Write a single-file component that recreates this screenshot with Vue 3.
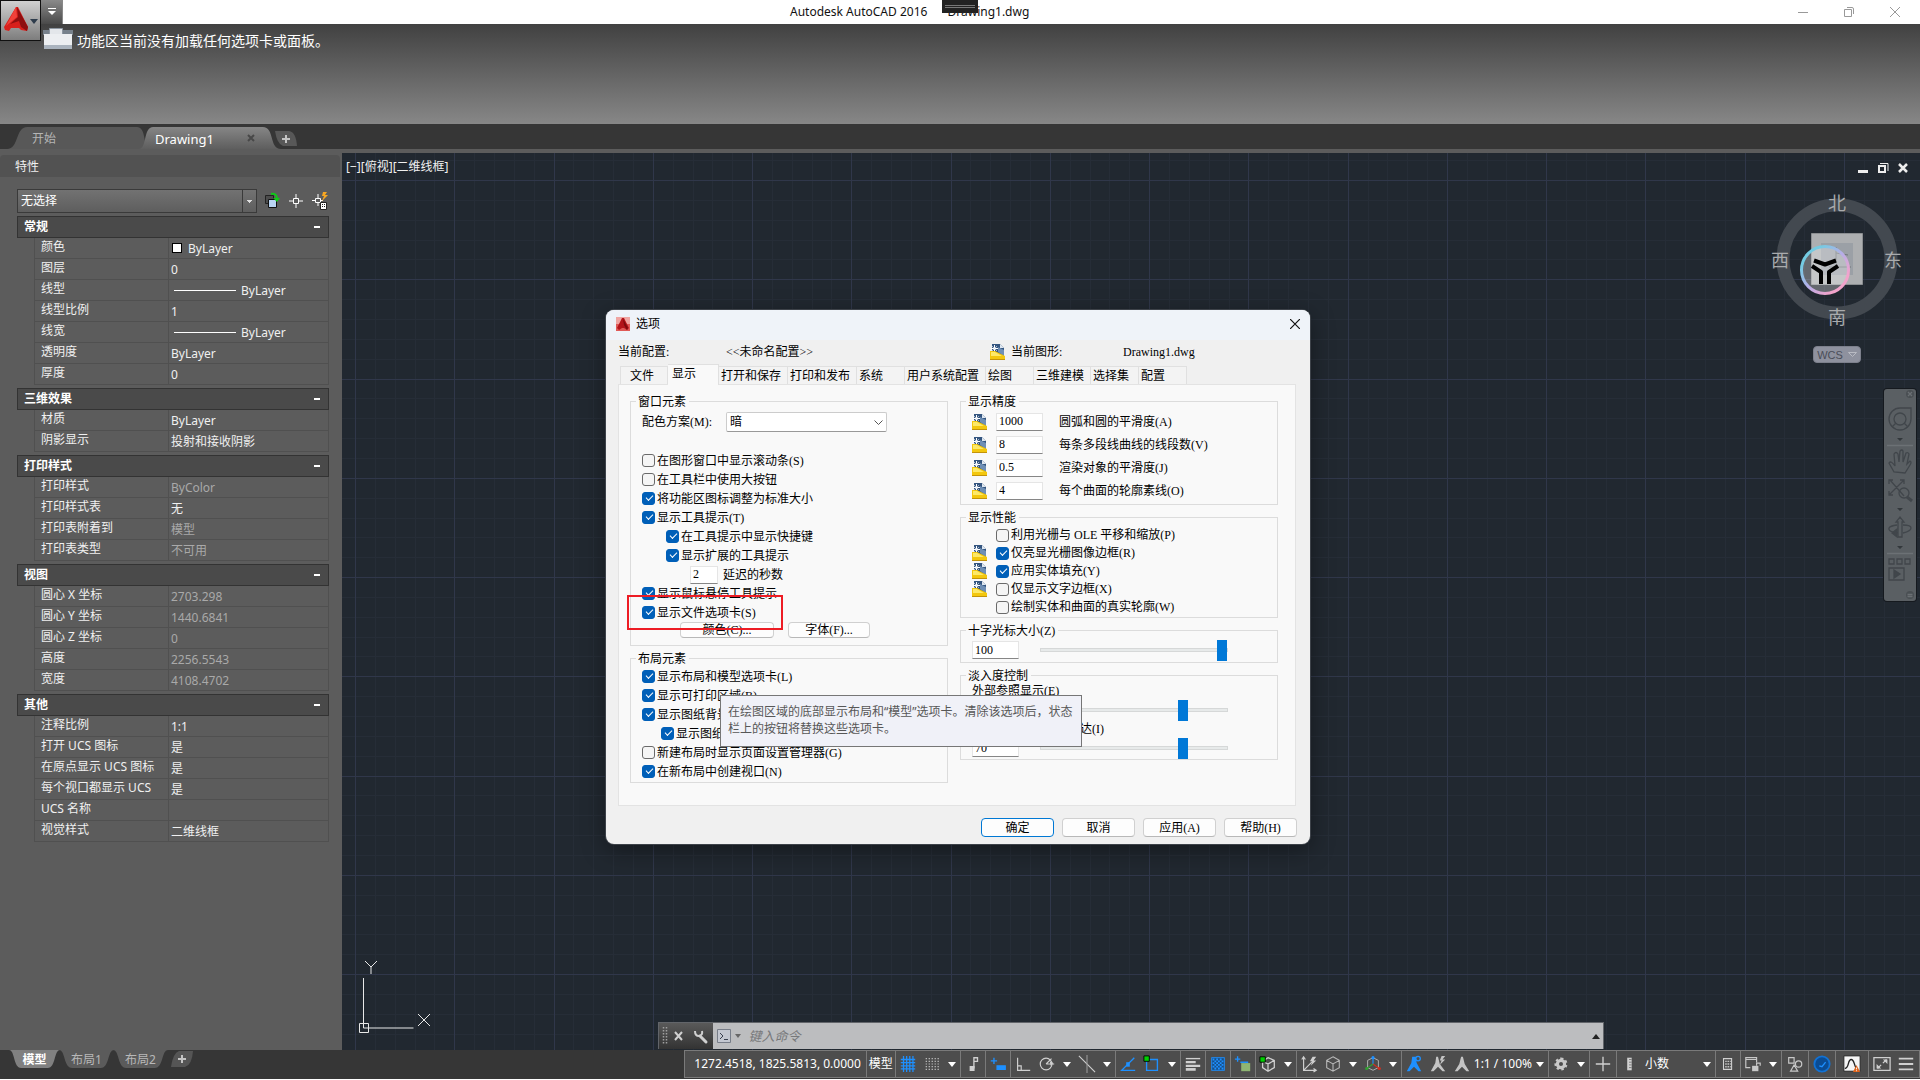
<script setup>
import { ref } from 'vue';

const sections = [
    {
        title: '常规',
        rows: [
            { label: '颜色', value: 'ByLayer', swatch: true },
            { label: '图层', value: '0' },
            { label: '线型', value: 'ByLayer', line: true },
            { label: '线型比例', value: '1' },
            { label: '线宽', value: 'ByLayer', line: true },
            { label: '透明度', value: 'ByLayer' },
            { label: '厚度', value: '0' },
        ],
    },
    {
        title: '三维效果',
        rows: [
            { label: '材质', value: 'ByLayer' },
            { label: '阴影显示', value: '投射和接收阴影' },
        ],
    },
    {
        title: '打印样式',
        rows: [
            { label: '打印样式', value: 'ByColor', muted: true },
            { label: '打印样式表', value: '无' },
            { label: '打印表附着到', value: '模型', muted: true },
            { label: '打印表类型', value: '不可用', muted: true },
        ],
    },
    {
        title: '视图',
        rows: [
            { label: '圆心 X 坐标', value: '2703.298', muted: true },
            { label: '圆心 Y 坐标', value: '1440.6841', muted: true },
            { label: '圆心 Z 坐标', value: '0', muted: true },
            { label: '高度', value: '2256.5543', muted: true },
            { label: '宽度', value: '4108.4702', muted: true },
        ],
    },
    {
        title: '其他',
        rows: [
            { label: '注释比例', value: '1:1' },
            { label: '打开 UCS 图标', value: '是' },
            { label: '在原点显示 UCS 图标', value: '是' },
            { label: '每个视口都显示 UCS', value: '是' },
            { label: 'UCS 名称', value: '' },
            { label: '视觉样式', value: '二维线框' },
        ],
    },
];

// drawing grid, every fifth line is a major one
const gridStep = 19.853;
const gridLines = (origin, from, count) =>
    Array.from({ length: count }, (_, i) => ({
        pos: Math.round(origin + (i + from) * gridStep),
        major: (i + from) % 5 === 0,
    }));
const columns = gridLines(13, 0, 100);
const gridRows = gridLines(27, -1, 60);

const tabs = ['文件', '显示', '打开和保存', '打印和发布', '系统', '用户系统配置', '绘图', '三维建模', '选择集', '配置'];
const activeTab = ref('显示');

const windowElements = ref([
    { label: '在图形窗口中显示滚动条(S)', on: false },
    { label: '在工具栏中使用大按钮', on: false },
    { label: '将功能区图标调整为标准大小', on: true },
    { label: '显示工具提示(T)', on: true },
    { label: '在工具提示中显示快捷键', on: true, indent: true },
    { label: '显示扩展的工具提示', on: true, indent: true },
    { label: '延迟的秒数', text: '2' },
    { label: '显示鼠标悬停工具提示', on: true },
    { label: '显示文件选项卡(S)', on: true },
]);

const layoutElements = ref([
    { label: '显示布局和模型选项卡(L)', on: true },
    { label: '显示可打印区域(B)', on: true },
    { label: '显示图纸背景(K)', on: true },
    { label: '显示图纸阴影(E)', on: true, indent: true },
    { label: '新建布局时显示页面设置管理器(G)', on: false },
    { label: '在新布局中创建视口(N)', on: true },
]);

const resolution = ref([
    { label: '圆弧和圆的平滑度(A)', value: '1000' },
    { label: '每条多段线曲线的线段数(V)', value: '8' },
    { label: '渲染对象的平滑度(J)', value: '0.5' },
    { label: '每个曲面的轮廓素线(O)', value: '4' },
]);

const performance = ref([
    { label: '利用光栅与 OLE 平移和缩放(P)', on: false },
    { label: '仅亮显光栅图像边框(R)', on: true, dwg: true },
    { label: '应用实体填充(Y)', on: true, dwg: true },
    { label: '仅显示文字边框(X)', on: false, dwg: true },
    { label: '绘制实体和曲面的真实轮廓(W)', on: false },
]);

const crosshair = ref(100);
const xrefFade = ref(70);
const editFade = ref(70);

const blue = '#1e90ff';
const icons = {
    grid: `<g stroke="${blue}" stroke-width="1.4"><path d="M5 1V19M8.500 1V19M12 1V19M15.500 1V19M2 5H18M2 8.500H18M2 12H18M2 15.500H18"/></g>`,
    snap: '<path stroke="#c8c8c8" stroke-width="1.3" stroke-dasharray="1.300 2" d="M3 4H18M3 7H18M3 10H18M3 13H18M3 16H18"/>',
    infer: '<g stroke="#d0d0d0" stroke-width="1.500"><path d="M11 3h4v4h-4zM11 7v8"/><path fill="#d0d0d0" d="M7 13h4v4H7z"/></g>',
    dynamic: `<g stroke="${blue}" stroke-width="1.500"><path d="M2 6.500h7M5.500 3v7"/><path fill="${blue}" d="M9 12h9v4H9z"/></g>`,
    ortho: '<path stroke="#d0d0d0" stroke-width="1.300" d="M4 3V17H18M4 12h4v5"/>',
    polar: '<g stroke="#d0d0d0" stroke-width="1.300"><circle cx="9" cy="10" r="6.500"/><path d="M9 10L15 4M9 10h9"/></g><path fill="#d0d0d0" d="M13 7l4 2-3 3z"/>',
    iso: '<g stroke="#d0d0d0" stroke-width="1.200"><path d="M1 1L19 19"/><path d="M10 0V20" stroke="#9a9a9a"/></g>',
    otrack: `<g stroke="${blue}" stroke-width="1.500"><path d="M17 3L3 17H18"/></g><path fill="${blue}" d="M8 8h4v5H8z"/>`,
    osnap: `<path stroke="${blue}" stroke-width="1.500" d="M4 5h12v12H4z"/><path fill="#00d000" stroke="#000" d="M1 1h6v6H1z"/>`,
    lwt: '<path stroke="#d0d0d0" d="M2 4h16" stroke-width="1.500"/><path stroke="#d0d0d0" stroke-width="2.500" d="M2 8h11M2 12h16"/><path stroke="#d0d0d0" stroke-width="3" d="M2 16h11"/>',
    transp: `<rect x="3" y="3" width="14" height="14" fill="#174f88" stroke="${blue}"/><path stroke="${blue}" stroke-dasharray="2 2" stroke-width="2" d="M4 5h12M4 9h12M4 13h12"/><path stroke="${blue}" stroke-dasharray="2 2" stroke-dashoffset="2" stroke-width="2" d="M4 7h12M4 11h12M4 15h12"/>`,
    cycle: `<path stroke="${blue}" stroke-width="1.500" d="M1 4.500h6M4 1.500v6M7 8h8v3"/><path fill="#8fb573" d="M8 9h10v9H8z"/>`,
    osnap3d: '<g stroke="#d0d0d0" stroke-width="1.400"><path d="M10 3l7 3v8l-7 4-6-4V7zM4 7l6 3 7-4M10 10v8"/></g><path fill="#00d000" stroke="#000" d="M1 2h6v6H1z"/>',
    ducs: '<path stroke="#d0d0d0" stroke-width="1.300" d="M4 3V17H18M4 17L15 6M2 5l2-3 2 3M15 15l3 2-3 2"/><path fill="#d0d0d0" d="M14 2l4 0-3 4h3l-6 6 2-5h-3z"/>',
    cube: '<path stroke="#b8b8b8" stroke-width="1.200" d="M10 2l7 4v8l-7 4-7-4V6zM3 6l7 4 7-4M10 10v8"/>',
    gizmo: `<path stroke="#b8b8b8" d="M10 3l6 3v8l-6 3-6-3V6z"/><path stroke="${blue}" stroke-width="1.300" d="M10 2v8"/><path stroke="#d03020" stroke-width="1.300" d="M10 10l7 5"/><path stroke="#30a030" stroke-width="1.300" d="M10 10l-7 5"/><circle cx="10" cy="3" r="1.800" fill="${blue}"/><circle cx="17" cy="15" r="1.800" fill="#d03020"/><circle cx="3" cy="15" r="1.800" fill="#30a030"/>`,
    annoOn: `<path fill="${blue}" d="M8 2h4l1 7 5 9h-3l-5-5-5 5H2l5-9z"/><circle cx="14.500" cy="4" r="2.500" stroke="${blue}" stroke-width="1.500"/>`,
    annoAuto: '<path fill="#c4c4c4" d="M8 2h2l2 8 6 8h-3l-5-5-5 5H2l5-9zM14 1h4l-3 4h3l-6 6 2-5h-2z"/>',
    anno: '<path fill="#c4c4c4" d="M9 2h2l2 8 5 8h-3l-5-5-5 5H2l5-8z"/>',
    gear: '<circle cx="10" cy="10" r="4" stroke="#c8c8c8" stroke-width="3.500"/><path stroke="#c8c8c8" stroke-width="2.500" stroke-dasharray="2.600 2.600" d="M10 4a6 6 0 1 1-.1 0z"/>',
    plus: '<path stroke="#d0d0d0" stroke-width="1.500" d="M10 2v16M2 10h16"/>',
    ruler: '<path fill="#d0d0d0" d="M8 3h5v14H8z"/><path stroke="#777" d="M10 5h3M10 8h3M10 11h3M10 14h3"/>',
    quick: '<path stroke="#d0d0d0" stroke-width="1.200" d="M5 4h9v12H5z"/><path stroke="#d0d0d0" stroke-width="1.500" stroke-dasharray="1.500 1" d="M7 7h6M7 10h6M7 13h6"/>',
    lock: '<path stroke="#c8c8c8" stroke-width="1.300" d="M7 14H2V3h12v5M2 5h12M14 12V9h4v3"/><path fill="#c8c8c8" d="M9 12h7v6H9z"/>',
    isolate: '<path stroke="#c8c8c8" stroke-width="1.300" d="M3 3h6v6H3zM5 18l4-7 4 7z"/><circle cx="14" cy="10" r="3.500" stroke="#c8c8c8" stroke-width="1.300"/>',
    hardware: `<circle cx="10" cy="10" r="8.500" fill="#0a4c94" stroke="#1272d4" stroke-width="2"/><path stroke="${blue}" stroke-width="1.500" d="M7 12l3 1 4-5"/>`,
    chart: '<path fill="#f4f4f4" stroke="#222" d="M1 1h18v17H1z"/><path stroke="#222" stroke-width="1.500" d="M2 15c5 0 3-10 7-10s3 7 6 10"/><path fill="#e0641c" d="M15 11l4 8h-8z"/><path stroke="#fff" d="M15 14v2M15 17v1"/>',
    clean: '<path stroke="#d0d0d0" stroke-width="1.400" d="M1 3h18v14H1zM11 9l4-4M9 11l-4 4"/><path fill="#d0d0d0" d="M11 5h5v5zM4 10v5h5z"/>',
    menu: '<path stroke="#d0d0d0" stroke-width="2" d="M2 4h16M2 10h16M2 16h16"/>',
};

// '>' is a drop-down arrow, the rest are icon names
const statusCells = [
    { items: ['grid', 'snap', '>'] },
    { items: ['infer'] },
    { items: ['dynamic'] },
    { items: ['ortho', 'polar', '>', 'iso', '>'] },
    { items: ['otrack', 'osnap', '>'] },
    { items: ['lwt'] },
    { items: ['transp'] },
    { items: ['cycle'] },
    { items: ['osnap3d', '>'] },
    { items: ['ducs', 'cube', '>', 'gizmo', '>'] },
    { items: ['annoOn', 'annoAuto', 'anno'], text: '1:1 / 100%', arrow: true },
    { items: ['gear', '>'] },
    { items: ['plus'], size: 'spaced' },
    { items: ['ruler'], text: '小数', arrow: true, wide: true },
    { items: ['quick'] },
    { items: ['lock', '>'] },
    { items: ['isolate'], size: 'spaced' },
    { items: ['hardware'], size: 'spaced' },
    { items: ['chart'], size: 'roomy' },
    { items: ['clean', 'menu'], size: 'spaced' },
];

const dwgIcon = '<path fill="#34557f" d="M2 0h8l4 4v9H2z"/><path fill="#6f8fb5" d="M8 3l6 3v6L8 8z"/><path fill="#dfe7f0" d="M10 0l4 4h-4z"/><path stroke="#fff" d="M4.500 1v7M1 4.500h7"/><path stroke="#dbe4ef" stroke-width=".7" d="M2 2l5 5M7 2L2 7"/><path fill="#f3c70e" d="M0 7h5l10 5v4H0z"/><path fill="#fde968" d="M1 8h4l7 4H1z"/><path stroke="#c3930a" d="M0 15.500h15"/>';
</script>

<template>
    <div class="app">
        <header class="titlebar">
            <button class="app-button" aria-label="AutoCAD">
                <svg width="38" height="38" viewBox="0 0 38 38">
                    <path fill="#d8201c" d="M15 5h2l10 20-1 4-6-1-2-2H10l-2 3-4-1-1-3z" />
                    <path fill="#8e0f10" d="M16 5l11 20-1 4-6-4-2-6-9 3 8-7z" />
                    <path fill="#f0413a" d="M15 5l1 10-11 9z" />
                    <path fill="#2e3c4c" d="M29 17h8l-4 5z" />
                </svg>
            </button>
            <button class="qat" aria-label="自定义快速访问工具栏">
                <svg width="10" height="8" viewBox="0 0 10 8"><path fill="#fff" d="M1 0h8v1H1zM1 3h8L5 7z" /></svg>
            </button>
            <span class="titlebar-text">Autodesk AutoCAD 2016 <span>Drawing1.dwg</span></span>
            <div class="handle"></div>
            <div class="window-buttons">
                <button aria-label="最小化"><svg width="10" height="10" viewBox="0 0 10 10"><path d="M0 5.500h10" stroke="#999" /></svg></button>
                <button aria-label="还原"><svg width="10" height="10" viewBox="0 0 10 10"><path d="M.5 2.500h7v7h-7zM3 .5h5q1.500 0 1.500 1.500v5" fill="none" stroke="#999" /></svg></button>
                <button aria-label="关闭"><svg width="10" height="10" viewBox="0 0 10 10"><path d="M0 0l10 10M10 0L0 10" stroke="#999" /></svg></button>
            </div>
        </header>

        <div class="ribbon">
            <svg width="30" height="22" viewBox="0 0 30 22">
                <path fill="#77818c" d="M0 2h30v5H0z" />
                <path fill="#e3e6ea" stroke="#8d96a1" d="M6.500.5h13v6h-13z" />
                <path fill="#eceef1" d="M1 6h28v13H1z" />
                <path fill="#aab3be" d="M1 17h28v4H1z" />
            </svg>
            <span>功能区当前没有加载任何选项卡或面板。</span>
        </div>

        <nav class="file-tabs">
            <button class="file-tab">
                <svg viewBox="0 0 140 21" preserveAspectRatio="none"><path d="M0 21C12 21 8 0 20 0H128C138 0 134 21 140 21Z" fill="#585858" /></svg>
                <span>开始</span>
            </button>
            <button class="file-tab current">
                <svg viewBox="0 0 140 21" preserveAspectRatio="none">
                    <defs>
                        <linearGradient id="tabFill" x2="0" y2="1"><stop stop-color="#868686" /><stop offset="1" stop-color="#5e5e5e" /></linearGradient>
                    </defs>
                    <path d="M0 21C8 21 4 0 14 0H122C134 0 128 21 140 21Z" fill="url(#tabFill)" />
                </svg>
                <span>Drawing1</span>
                <svg class="tab-close" viewBox="0 0 8 8"><path d="M1 1l6 6M7 1L1 7" stroke="#484848" stroke-width="2" /></svg>
            </button>
            <button class="add-tab" aria-label="新图形">
                <svg width="22" height="15" viewBox="0 0 22 15"><path d="M0 0H14Q21 1 22 15H8Q2 13 0 0Z" fill="#585858" /><path d="M11 4v8M7 8h8" stroke="#c4c4c4" stroke-width="2" /></svg>
            </button>
        </nav>

        <main class="workspace">
            <aside class="palette">
                <h2 class="palette-title">特性</h2>
                <div class="palette-body">
                    <div class="picker">
                        <select aria-label="选择对象"><option>无选择</option></select>
                        <button aria-label="切换 PICKADD">
                            <svg width="16" height="18" viewBox="0 0 16 18"><path fill="#4c4c4c" stroke="#222" d="M1.500 3.500h8v8h-8z" /><path fill="#b9d4f3" stroke="#111" d="M4.500 7.500h8v8h-8z" /><path d="M7 2q6-1 6 5" fill="none" stroke="#10c818" stroke-width="2" /><path fill="#10c818" d="M9 6h7l-3 4z" /></svg>
                        </button>
                        <button aria-label="选择对象">
                            <svg width="14" height="14" viewBox="0 0 14 14"><path d="M7 0v5M7 9v5M0 7h5M9 7h5M4.500 4.500h5v5h-5z" fill="none" stroke="#fff" /></svg>
                        </button>
                        <button aria-label="快速选择">
                            <svg width="16" height="18" viewBox="0 0 16 18"><path d="M6 2v5M6 10v4M0 8.500h4M8 8.500h3M3.500 6.500h5v4h-5z" fill="none" stroke="#fff" /><path fill="#f5a623" d="M11 0h4l-2 3h3l-6 6 2-5h-2z" /><path fill="#fff" stroke="#222" d="M8.500 10.500h6v7h-6z" /><path d="M10 12.500h4M10 14.500h4" stroke="#222" stroke-dasharray="1 1" /></svg>
                        </button>
                    </div>
                    <section v-for="section in sections" :key="section.title" class="prop-section">
                        <h3>{{ section.title }}<span class="collapse"></span></h3>
                        <table>
                            <tbody>
                                <tr v-for="row in section.rows" :key="row.label">
                                    <th scope="row">{{ row.label }}</th>
                                    <td :class="{ muted: row.muted }">
                                        <span v-if="row.swatch" class="swatch"></span>
                                        <span v-if="row.line" class="sample"></span>{{ row.value }}
                                    </td>
                                </tr>
                            </tbody>
                        </table>
                    </section>
                </div>
            </aside>

            <section class="canvas">
                <svg class="grid" width="100%" height="100%">
                    <g v-for="major in [false, true]" :key="major" :stroke="major ? '#30374a' : '#262d37'">
                        <template v-for="line in columns" :key="line.pos">
                            <line v-if="line.major === major" :x1="line.pos + 0.5" :x2="line.pos + 0.5" y1="0" y2="100%" />
                        </template>
                        <template v-for="line in gridRows" :key="line.pos">
                            <line v-if="line.major === major" x1="0" x2="100%" :y1="line.pos + 0.5" :y2="line.pos + 0.5" />
                        </template>
                    </g>
                </svg>
                <div class="view-label">[−][俯视][二维线框]</div>

                <div class="doc-buttons">
                    <svg width="12" height="12" viewBox="0 0 12 12"><path d="M1 8h10v3H1z" fill="#eee" /></svg>
                    <svg width="12" height="12" viewBox="0 0 12 12"><path d="M2 4h6v6H2z" fill="none" stroke="#eee" stroke-width="2" /><path d="M3 1.500h8V9" fill="none" stroke="#eee" /></svg>
                    <svg width="12" height="12" viewBox="0 0 12 12"><path d="M2 2l8 8M10 2l-8 8" stroke="#eee" stroke-width="2.500" /></svg>
                </div>

                <div class="viewcube">
                    <svg width="136" height="136" viewBox="0 0 136 136">
                        <defs>
                            <linearGradient id="halo" x1="0" y1="0" x2="1" y2="1">
                                <stop offset=".2" stop-color="#74cbe2" />
                                <stop offset=".5" stop-color="#b5aee8" />
                                <stop offset=".8" stop-color="#f2a3cb" />
                            </linearGradient>
                        </defs>
                        <circle cx="68" cy="67" r="54" fill="none" stroke="#434950" stroke-width="13" />
                        <path fill="#adafb1" stroke="#8b8e91" d="M42.500 41.500h51v51h-51z" />
                        <path fill="#9ba0a6" d="M52 51h32v32H52z" />
                        <path stroke="#70757b" fill="none" d="M67 55v22M67 61l12 2M60 75h22" />
                        <circle cx="56" cy="78" r="23.500" fill="#fff" fill-opacity=".3" stroke="url(#halo)" stroke-width="3" />
                        <path fill="none" stroke="#000" stroke-width="4" stroke-linejoin="round" d="M45 68.500l11 4 11-4M43 74l9 6v12M69 74l-9 6v12" />
                        <g fill="#a9abad" font-size="18" text-anchor="middle" font-family="'Liberation Serif', 'Noto Sans CJK SC', sans-serif">
                            <text x="68" y="18">北</text>
                            <text x="68" y="132">南</text>
                            <text x="11" y="75">西</text>
                            <text x="124" y="75">东</text>
                        </g>
                    </svg>
                    <button class="wcs">WCS <svg width="9" height="5" viewBox="0 0 9 5"><path d="M.5.5h8l-4 4z" fill="none" stroke="#b8bac2" /></svg></button>
                </div>

                <div class="navbar">
                    <svg width="32" height="212" viewBox="0 0 32 212" fill="none" stroke="#41464b" stroke-width="1.300">
                        <circle cx="26" cy="5" r="4" fill="#4a4f53" stroke="none" /><path d="M24 3l4 4M28 3l-4 4" stroke="#6a6f73" />
                        <path d="M16 19h11v11a11 11 0 1 1-11-11z" /><circle cx="16" cy="30" r="6" /><path d="M12 34l-4 4M20 34l4 4" />
                        <path fill="#33383c" stroke="none" d="M13 49h6l-3 3zM13 119h6l-3 3zM13 157h6l-3 3z" />
                        <path stroke="#6c7175" d="M3 56.500h26M3 164.500h26" />
                        <path d="M10 83l-5-9q2-3 6 3l-1-12q2-3 4 0l1 8 1-11q2-2 3 0v11l3-9q2-1 3 1l-2 10 3-3q2 1 0 4l-5 8z" />
                        <path d="M6 91l14 16M20 91L5 106M5 95v-4h4M16 91h4v4M5 102v4h4" /><circle cx="20" cy="104" r="5" /><path d="M23 108l5 4" stroke-width="3" />
                        <path d="M14 148v-15h-2l4-5 4 5h-2v15zM14 144q-10-1-9-5 1-2 8-3M19 136q8 0 8 3t-8 5" /><path fill="#41464b" d="M8 144l5-4v8z" />
                        <path d="M5 170h5v5H5zM13 170h5v5h-5zM21 170h5v5h-5zM5 179h15v12H5z" /><path fill="#41464b" d="M10 181l6 4-6 4z" />
                        <circle cx="26" cy="206" r="4" fill="#4a4f53" stroke="none" /><path d="M23.500 205.500h5M23.500 207.500h5" stroke="#6a6f73" />
                    </svg>
                </div>

                <svg class="ucs" width="80" height="80" viewBox="0 0 80 80" fill="none" stroke="#e8e8e8">
                    <path d="M5.500 18v50h50M1.500 63.500h9v9h-9z" />
                    <path d="M7 1l6 6 6-6M13 7v7M60 54l12 12M72 54L60 66" />
                </svg>

                <form class="command" @submit.prevent>
                    <div class="command-grip">
                        <svg width="54" height="26" viewBox="0 0 54 26">
                            <path d="M4.500 4v18M7.500 4v18" stroke="#a0a0a0" stroke-width="1.500" stroke-dasharray="1.500 1.500" />
                            <path d="M16 9l7 8M23 9l-7 8" stroke="#d0d0d0" stroke-width="2" />
                            <path d="M41 13l6 6" stroke="#d0d0d0" stroke-width="3" stroke-linecap="round" />
                            <path d="M36 8q0 5 4 5 4-1 3-5" fill="none" stroke="#d0d0d0" stroke-width="2" />
                        </svg>
                    </div>
                    <svg class="prompt" width="28" height="16" viewBox="0 0 28 16">
                        <path fill="#c3c7d0" stroke="#777d88" d="M.5 1.500h13v13H.5z" /><path d="M3 5l3 3-3 3M7 11.500h4" fill="none" stroke="#3a4150" /><path fill="#666" d="M18 6h6l-3 4z" />
                    </svg>
                    <input type="text" placeholder="键入命令" aria-label="命令行">
                    <svg class="expand" width="8" height="5" viewBox="0 0 8 5"><path fill="#222" d="M4 0l4 5H0z" /></svg>
                </form>
            </section>
        </main>

        <footer class="bottom">
            <nav class="layout-tabs">
                <button class="current">
                    <svg viewBox="0 0 50 17" preserveAspectRatio="none"><path d="M0 0C6 0 4 17 12 17H38C46 17 44 0 50 0Z" fill="#808080" /></svg><span>模型</span>
                </button>
                <button>
                    <svg viewBox="0 0 50 17" preserveAspectRatio="none"><path d="M0 0C6 0 4 17 12 17H38C46 17 44 0 50 0Z" fill="#5b5b5b" /></svg><span>布局1</span>
                </button>
                <button>
                    <svg viewBox="0 0 50 17" preserveAspectRatio="none"><path d="M0 0C6 0 4 17 12 17H38C46 17 44 0 50 0Z" fill="#5b5b5b" /></svg><span>布局2</span>
                </button>
                <button class="add-layout" aria-label="新建布局">
                    <svg viewBox="0 0 22 16"><path d="M8 0H22Q21 14 14 16H0Q2 2 8 0Z" fill="#555" /><path d="M11 4v8M7 8h8" stroke="#c4c4c4" stroke-width="2" /></svg>
                </button>
            </nav>
            <div class="status">
                <div class="cell coords">1272.4518, 1825.5813, 0.0000</div>
                <button class="cell model">模型</button>
                <div v-for="(cell, i) in statusCells" :key="i" class="cell" :class="cell.size">
                    <template v-for="(item, j) in cell.items" :key="j">
                        <button v-if="item === '>'" class="arrow" aria-label="展开"></button>
                        <button v-else class="icon" :aria-label="item">
                            <svg width="20" height="20" viewBox="0 0 20 20" fill="none" v-html="icons[item]"></svg>
                        </button>
                    </template>
                    <button v-if="cell.text" class="cell-text" :class="{ wide: cell.wide }">{{ cell.text }}</button>
                    <button v-if="cell.arrow" class="arrow" aria-label="展开"></button>
                </div>
            </div>
        </footer>

        <div class="dialog" role="dialog" aria-labelledby="dialog-title">
            <div class="dialog-title">
                <svg width="14" height="14" viewBox="0 0 14 14"><path fill="#f0a5a2" d="M0 0h14v14H0z" /><path fill="#e05a58" d="M0 7h14v7H0z" /><path fill="#b3141a" d="M6 1h2l5 10-2 2-3-2H6l-3 2-2-2z" /><path fill="#7d0b0f" d="M7 2l5 9-1 2-3-5z" /></svg>
                <span id="dialog-title">选项</span>
                <button aria-label="关闭"><svg width="10" height="10" viewBox="0 0 10 10"><path d="M0 0l10 10M10 0L0 10" stroke="#111" stroke-width="1.200" /></svg></button>
            </div>
            <div class="profile">
                <span>当前配置:</span>
                <span>&lt;&lt;未命名配置&gt;&gt;</span>
                <svg width="16" height="16" viewBox="0 0 16 16" fill="none" v-html="dwgIcon"></svg>
                <span>当前图形:</span>
                <span>Drawing1.dwg</span>
            </div>
            <div class="tabs" role="tablist">
                <button v-for="tab in tabs" :key="tab" role="tab" :class="{ active: tab === activeTab }" @click="activeTab = tab">{{ tab }}</button>
            </div>
            <div class="panel">
                <div class="column">
                    <fieldset>
                        <legend>窗口元素</legend>
                        <div class="scheme">
                            <label for="scheme">配色方案(M):</label>
                            <select id="scheme"><option>暗</option><option>明</option></select>
                        </div>
                        <div class="checks">
                            <template v-for="item in windowElements" :key="item.label">
                                <label v-if="item.text" class="seconds"><input v-model="item.text" type="text">{{ item.label }}</label>
                                <label v-else :class="{ indent: item.indent }"><input v-model="item.on" type="checkbox">{{ item.label }}</label>
                            </template>
                        </div>
                        <div class="extra-buttons">
                            <button>颜色(C)...</button>
                            <button>字体(F)...</button>
                        </div>
                    </fieldset>
                    <fieldset>
                        <legend>布局元素</legend>
                        <div class="checks layout-checks">
                            <label v-for="item in layoutElements" :key="item.label" :class="{ indent: item.indent }"><input v-model="item.on" type="checkbox">{{ item.label }}</label>
                        </div>
                    </fieldset>
                </div>
                <div class="column">
                    <fieldset>
                        <legend>显示精度</legend>
                        <div class="resolution">
                            <label v-for="item in resolution" :key="item.label">
                                <svg width="16" height="16" viewBox="0 0 16 16" fill="none" v-html="dwgIcon"></svg>
                                <input v-model="item.value" type="text">{{ item.label }}
                            </label>
                        </div>
                    </fieldset>
                    <fieldset>
                        <legend>显示性能</legend>
                        <div class="performance">
                            <label v-for="item in performance" :key="item.label">
                                <span class="slot"><svg v-if="item.dwg" width="16" height="16" viewBox="0 0 16 16" fill="none" v-html="dwgIcon"></svg></span>
                                <input v-model="item.on" type="checkbox">{{ item.label }}
                            </label>
                        </div>
                    </fieldset>
                    <fieldset>
                        <legend>十字光标大小(Z)</legend>
                        <div class="slider-row crosshair">
                            <input v-model="crosshair" type="text" aria-label="十字光标大小">
                            <input v-model="crosshair" type="range" max="100" aria-label="十字光标大小">
                        </div>
                    </fieldset>
                    <fieldset>
                        <legend>淡入度控制</legend>
                        <label class="fade-label" for="xref">外部参照显示(E)</label>
                        <div class="slider-row">
                            <input id="xref" v-model="xrefFade" type="text">
                            <input v-model="xrefFade" type="range" max="90" aria-label="外部参照显示">
                        </div>
                        <label class="fade-label" for="edit">在位编辑和注释性表达(I)</label>
                        <div class="slider-row">
                            <input id="edit" v-model="editFade" type="text">
                            <input v-model="editFade" type="range" max="90" aria-label="在位编辑和注释性表达">
                        </div>
                    </fieldset>
                </div>
            </div>
            <div class="actions">
                <button class="default">确定</button>
                <button>取消</button>
                <button>应用(A)</button>
                <button>帮助(H)</button>
            </div>
            <div class="highlight"></div>
            <div class="tooltip" role="tooltip">在绘图区域的底部显示布局和“模型”选项卡。清除该选项后，状态<br>栏上的按钮将替换这些选项卡。</div>
        </div>
    </div>
</template>

<style>
body {
    background: #fff;
    overflow: hidden;
}
</style>

<style scoped>
.app {
    position: relative;
    box-sizing: border-box;
    height: 100vh;
    padding-bottom: 1px;
    display: flex;
    flex-direction: column;
    background: #fff;
    color: #f0f0f0;
    font: 12px/16px "Noto Sans", "Noto Sans CJK SC", sans-serif;
}

button,
input,
select {
    font: inherit;
    color: inherit;
    margin: 0;
    padding: 0;
    border: 0;
    background: none;
    box-sizing: border-box;
}

svg {
    display: block;
    flex: none;
}

/* title bar */
.titlebar {
    position: relative;
    height: 24px;
    display: flex;
    align-items: center;
    background: #fff;
    color: #111;
}

.app-button {
    position: absolute;
    z-index: 2;
    left: 0;
    top: 0;
    width: 41px;
    height: 41px;
    border: 1px solid #111;
    background: linear-gradient(#d0d0d0, #7d7d7d);
}

.qat {
    width: 22px;
    height: 24px;
    margin-left: 41px;
    display: grid;
    place-items: center;
    border-right: 1px solid #888;
    background: linear-gradient(#8a8a8a, #4a4a4a);
}

.titlebar-text {
    margin-left: 727px;
}

.titlebar-text span {
    margin-left: 17px;
}

.handle {
    position: absolute;
    left: 942px;
    top: 0;
    width: 30px;
    height: 3px;
    padding: 0;
    border: 3px solid #222;
    border-top-width: 5px;
    border-bottom-width: 5px;
    background: linear-gradient(#777 1px, #222 1px, #222 2px, #777 2px);
}

.window-buttons {
    margin-left: auto;
    display: flex;
}

.window-buttons button {
    width: 46px;
    height: 22px;
    display: grid;
    place-items: center;
}

.window-buttons button:last-child {
    margin-right: 2px;
}

.ribbon {
    height: 100px;
    padding: 4px 0 0 43px;
    box-sizing: border-box;
    display: flex;
    gap: 4px;
    background: linear-gradient(#414141, #878787);
    color: #fff;
    font-size: 14px;
    line-height: 26px;
}

/* file tabs */
.file-tabs {
    height: 25px;
    display: flex;
    align-items: flex-end;
    background: #363636;
    border-bottom: 4px solid #5c5c5c;
}

.file-tab {
    position: relative;
    width: 142px;
    height: 22px;
    margin-left: 7px;
    padding: 1px 0 0 25px;
    text-align: left;
    color: #b5b5b5;
}

.file-tab > svg:first-child,
.layout-tabs svg {
    position: absolute;
    inset: 0;
    width: 100%;
    height: 100%;
}

.file-tab span,
.layout-tabs span {
    position: relative;
}

.file-tab.current {
    margin-left: -10px;
    padding-left: 16px;
    color: #fff;
    font-size: 13px;
}

.tab-close {
    position: absolute;
    right: 26px;
    top: 7px;
    width: 8px;
    height: 8px;
}

.add-tab {
    align-self: flex-end;
    margin: 0 0 3px -6px;
}

/* properties palette */
.workspace {
    flex: 1;
    min-height: 0;
    display: flex;
    background: #5c5c5c;
}

.palette {
    width: 342px;
    flex: none;
    padding-top: 2px;
    box-sizing: border-box;
}

.palette-title {
    height: 22px;
    margin: 0 2px 0 0;
    padding-left: 15px;
    border-radius: 4px 4px 0 0;
    background: #525252;
    font-size: 12px;
    font-weight: 400;
    line-height: 24px;
}

.palette-body {
    padding: 12px 13px 0 17px;
}

.picker {
    display: flex;
    align-items: center;
    margin-bottom: 3px;
}

.picker select {
    appearance: none;
    flex: none;
    width: 240px;
    height: 24px;
    margin-right: 3px;
    padding-left: 3px;
    border: 1px solid #3a3a3a;
    color: #fff;
    background:
        linear-gradient(#ddd, #ddd) 229px 10px / 5px 1px no-repeat,
        linear-gradient(#ddd, #ddd) 230px 11px / 3px 1px no-repeat,
        linear-gradient(#ddd, #ddd) 231px 12px / 1px 1px no-repeat,
        linear-gradient(#3a3a3a, #3a3a3a) 224px 0 / 1px 24px no-repeat,
        linear-gradient(#727272, #5e5e5e);
}

.picker button {
    flex: none;
    width: 24px;
    display: grid;
    place-items: center;
}

.prop-section {
    margin-bottom: 3px;
}

.prop-section h3 {
    height: 22px;
    margin: 0;
    padding: 0 8px 0 6px;
    box-sizing: border-box;
    display: flex;
    align-items: center;
    justify-content: space-between;
    border: 1px solid #333;
    background: #4a4a4a;
    color: #fff;
    font-size: 12px;
}

.collapse {
    width: 6px;
    height: 2px;
    background: #fff;
}

.prop-section table {
    width: 295px;
    margin-left: 17px;
    table-layout: fixed;
    border-spacing: 0;
    border-left: 1px solid #505050;
}

.prop-section th,
.prop-section td {
    height: 21px;
    box-sizing: border-box;
    border: solid #505050;
    border-width: 0 1px 1px 0;
    white-space: nowrap;
    line-height: 16px;
}

.prop-section th {
    width: 134px;
    padding: 0 0 3px 6px;
    text-align: left;
    font-weight: 400;
}

.prop-section td {
    padding: 1px 0 0 2px;
}

.prop-section td.muted {
    color: #a9a9a9;
}

.swatch {
    display: inline-block;
    width: 8px;
    height: 8px;
    margin: 0 6px 0 1px;
    border: 1px solid #000;
    background: #fff;
}

.sample {
    display: inline-block;
    width: 62px;
    height: 1px;
    margin: 0 5px 4px 3px;
    background: #fff;
}

/* drawing area */
.canvas {
    position: relative;
    flex: 1;
    overflow: hidden;
    background: #212830;
}

.grid {
    position: absolute;
    inset: 0;
}

.view-label {
    position: absolute;
    left: 4px;
    top: 6px;
}

.doc-buttons {
    position: absolute;
    right: 11px;
    top: 9px;
    display: flex;
    gap: 8px;
}

.viewcube {
    position: absolute;
    right: 15px;
    top: 39px;
}

.wcs {
    width: 48px;
    height: 17px;
    margin: 18px auto 0;
    display: flex;
    align-items: center;
    justify-content: center;
    gap: 5px;
    border: 1px solid #7d808c;
    border-radius: 4px;
    background: #8e919e;
    color: #4a4d58;
    font: 11px "Liberation Sans", sans-serif;
}

.navbar {
    position: absolute;
    right: 4px;
    top: 236px;
    border-radius: 3px;
    background: #5a5f63;
    box-shadow: 0 0 0 1px #15191e;
}

.ucs {
    position: absolute;
    left: 16px;
    bottom: 10px;
}

.command {
    position: absolute;
    left: 20%;
    bottom: 1px;
    width: 60%;
    height: 27px;
    box-sizing: border-box;
    display: flex;
    align-items: center;
    border: 1px solid #62656a;
    border-bottom: 0;
    background: #bcbdbf;
}

.command-grip {
    background: linear-gradient(#5a5a5a, #333);
}

.prompt {
    margin-left: 4px;
}

.command input {
    flex: 1;
    margin-left: 4px;
    font-size: 13px;
    outline: none;
}

.command input::placeholder {
    color: #77787a;
    font-style: italic;
}

.expand {
    margin-right: 3px;
}

/* bottom bar */
.bottom {
    height: 29px;
    flex: none;
    display: flex;
    justify-content: space-between;
    background: #363636;
}

.layout-tabs {
    display: flex;
    margin-left: 9px;
}

.layout-tabs button {
    position: relative;
    width: 55px;
    height: 18px;
    margin-right: -1px;
    padding-top: 1px;
    color: #b8b8b8;
}

.layout-tabs .current {
    width: 51px;
    color: #fff;
    font-weight: 700;
}

.layout-tabs .add-layout {
    width: 22px;
    height: 16px;
    margin: 1px 0 0 4px;
}

.status {
    display: flex;
    align-items: flex-start;
    white-space: nowrap;
}

.cell {
    height: 28px;
    box-sizing: border-box;
    display: flex;
    align-items: center;
    border: 1px solid #7a7a7a;
    border-left-width: 0;
    background: #4d4d4d;
    color: #fff;
}

.coords {
    width: 183px;
    padding-right: 5px;
    justify-content: flex-end;
    border-left-width: 1px;
}

.model {
    padding: 0 2px;
}

.icon {
    width: 24px;
    height: 24px;
    display: grid;
    place-items: center;
}

.icon svg {
    width: 18px;
    height: 18px;
}

.spaced {
    padding: 0 1px;
}

.roomy {
    padding: 0 4px;
}

.arrow {
    width: 16px;
    height: 24px;
}

.arrow::before {
    content: "";
    display: block;
    width: 0;
    margin: 0 auto;
    border: 4px solid transparent;
    border-top: 5px solid #fff;
    border-bottom: 0;
}

.cell-text.wide {
    width: 58px;
    padding-left: 4px;
    text-align: left;
}

/* options dialog */
.dialog {
    position: absolute;
    left: 606px;
    top: 310px;
    width: 704px;
    padding-bottom: 7px;
    box-sizing: border-box;
    border-radius: 8px;
    background: #f0f0f0;
    box-shadow: 0 0 0 1px #3d4249, 0 6px 24px rgba(0, 0, 0, 0.4);
    color: #000;
    font: 12px/14px "Liberation Serif", "Noto Sans CJK SC", sans-serif;
}

.dialog-title {
    height: 30px;
    padding: 0 10px 2px;
    box-sizing: border-box;
    display: flex;
    align-items: center;
    gap: 6px;
    border-radius: 8px 8px 0 0;
    background: #eff3f9;
}

.dialog-title button {
    margin-left: auto;
    display: grid;
}

.profile {
    height: 24px;
    padding-left: 12px;
    display: grid;
    grid-template-columns: 108px 264px 21px 112px 1fr;
    align-items: center;
}

.tabs {
    display: flex;
    align-items: flex-end;
    margin-left: 14px;
}

.tabs button {
    min-width: 48px;
    height: 18px;
    padding: 0 6px 0 2px;
    text-align: left;
    border: 1px solid #e0e0e0;
    border-width: 1px 1px 0 0;
    background: #f3f3f3;
    white-space: nowrap;
}

.tabs button:first-child {
    border-left-width: 1px;
    text-align: center;
}

.tabs .active {
    position: relative;
    min-width: 51px;
    height: 21px;
    margin-bottom: -1px;
    padding: 0 4px 3px;
    background: #f9f9f9;
}

.panel {
    margin: 0 14px 12px 12px;
    padding: 9px 17px 22px 11px;
    display: grid;
    grid-template-columns: 1fr 1fr;
    gap: 12px;
    border: 1px solid #e3e3e3;
    background: #f9f9f9;
}

.column {
    display: flex;
    flex-direction: column;
    gap: 5px;
}

fieldset {
    min-width: 0;
    margin: 0;
    padding: 0 11px 1px;
    border: 1px solid #dcdcdc;
}

legend {
    height: 14px;
    margin-left: -6px;
    padding: 0 3px 0 2px;
    line-height: 16px;
}

.dialog input[type="text"] {
    height: 18px;
    padding: 0 0 0 2px;
    border: 1px solid #e5e5e5;
    border-bottom-color: #868686;
    background: #fff;
}

.dialog input[type="checkbox"] {
    appearance: none;
    flex: none;
    position: relative;
    width: 13px;
    height: 13px;
    margin-right: 2px;
    border: 1px solid #6a6a6a;
    border-radius: 3px;
    background: #f5f5f5;
}

.dialog input[type="checkbox"]:checked {
    border-color: #005fb8;
    background: #005fb8;
}

.dialog input[type="checkbox"]:checked::after {
    content: "";
    position: absolute;
    left: 3px;
    top: 2px;
    width: 6px;
    height: 3px;
    border: solid #fff;
    border-width: 0 0 1px 1px;
    transform: rotate(-45deg);
}

.scheme {
    display: flex;
    align-items: center;
    margin-top: 4px;
}

.scheme label {
    width: 84px;
}

.scheme select {
    appearance: none;
    width: 161px;
    height: 20px;
    padding-left: 3px;
    border: 1px solid #ccc;
    border-bottom-color: #999;
    border-radius: 2px;
    background: #fff url("data:image/svg+xml,%3Csvg xmlns='http://www.w3.org/2000/svg' width='9' height='6'%3E%3Cpath d='M.5.5l4 4 4-4' fill='none' stroke='%23555'/%3E%3C/svg%3E") 147px 7px no-repeat;
}

.checks {
    display: grid;
    grid-auto-rows: 19px;
    margin-top: 19px;
}

.layout-checks {
    margin-top: 2px;
}

.checks label,
.performance label,
.resolution label {
    display: flex;
    align-items: center;
    white-space: nowrap;
}

.checks .indent {
    padding-left: 24px;
}

.layout-checks .indent {
    padding-left: 19px;
}

.checks .seconds {
    padding-left: 48px;
}

.seconds input {
    width: 28px;
    margin-right: 5px;
}

.extra-buttons {
    display: flex;
    gap: 14px;
    margin: 0 0 6px 38px;
}

.extra-buttons button,
.actions button {
    width: 82px;
    height: 16px;
    line-height: 12px;
    border: 1px solid #d0d0d0;
    border-bottom-color: #b8b8b8;
    border-radius: 4px;
    background: #fdfdfd;
}

.extra-buttons button:first-child {
    width: 94px;
}

.resolution {
    display: grid;
    grid-auto-rows: 23px;
    margin: 2px 0 1px;
}

.resolution input {
    width: 47px;
    margin: 0 16px 0 8px;
}

.performance {
    display: grid;
    grid-auto-rows: 18px;
    margin-top: 2px;
}

.slot {
    width: 24px;
}

.slider-row {
    height: 20px;
    display: flex;
    align-items: center;
}

.slider-row input[type="text"] {
    width: 47px;
    margin-right: 21px;
}

.crosshair {
    padding: 3px 0 1px;
}

.slider-row input[type="range"] {
    appearance: none;
    width: 188px;
    height: 21px;
}

.slider-row input[type="range"]::-webkit-slider-runnable-track {
    height: 4px;
    border: 1px solid #d6d8d8;
    box-sizing: border-box;
    background: #e7eaea;
}

.slider-row input[type="range"]::-webkit-slider-thumb {
    appearance: none;
    width: 10px;
    height: 21px;
    margin-top: -9px;
    background: #0078d7;
}

.fade-label {
    display: block;
    height: 18px;
    line-height: 18px;
}

.actions {
    display: flex;
    justify-content: flex-end;
    gap: 8px;
    padding-right: 13px;
}

.actions button {
    width: 73px;
    height: 19px;
    line-height: 16px;
}

.actions .default {
    border-color: #0078d4;
}

.highlight {
    position: absolute;
    left: 21px;
    top: 285px;
    width: 156px;
    height: 35px;
    box-sizing: border-box;
    border: 2px solid #ed1c24;
}

.tooltip {
    position: absolute;
    left: 114px;
    top: 385px;
    width: 362px;
    height: 52px;
    box-sizing: border-box;
    padding: 7px 0 0 7px;
    border: 1px solid #767676;
    background: #f0f1f8;
    color: #575757;
    font: 12px/17px "Noto Sans", "Noto Sans CJK SC", sans-serif;
    white-space: nowrap;
}
</style>
